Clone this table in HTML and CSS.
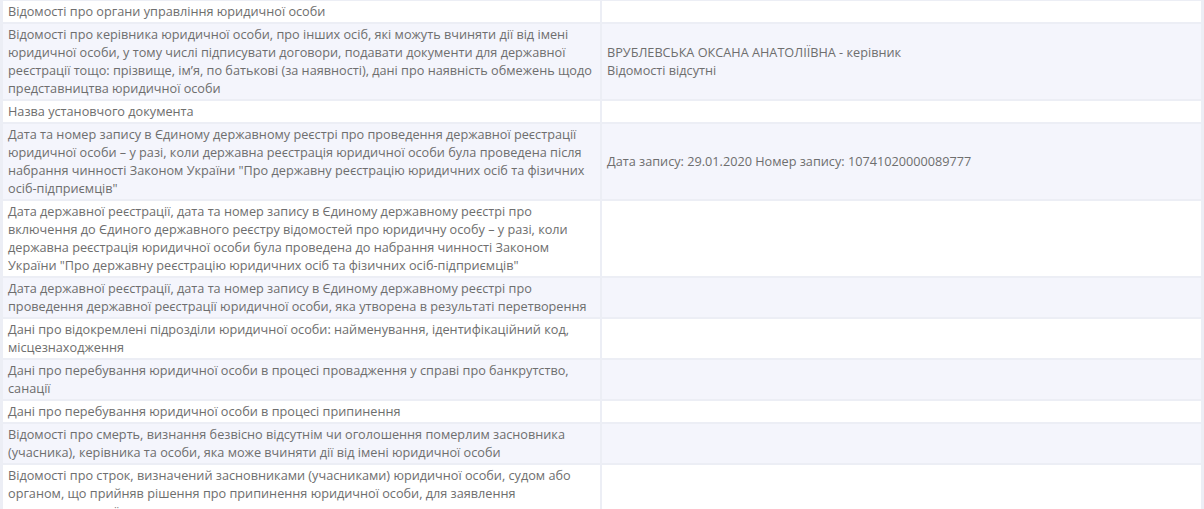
FILE: index.html
```html
<!DOCTYPE html>
<html lang="uk">
<head>
<meta charset="utf-8">
<link rel="stylesheet" href="styles.css">
</head>
<body>
<table class="info">
<tbody>
<tr class="odd"><td class="label">Відомості про органи управління юридичної особи</td><td class="value"></td></tr>
<tr class="even"><td class="label">Відомості про керівника юридичної особи, про інших осіб, які можуть вчиняти дії від імені юридичної особи, у тому числі підписувати договори, подавати документи для державної реєстрації тощо: прізвище, ім’я, по батькові (за наявності), дані про наявність обмежень щодо представництва юридичної особи</td><td class="value">ВРУБЛЕВСЬКА ОКСАНА АНАТОЛІЇВНА - керівник<br>Відомості відсутні</td></tr>
<tr class="odd"><td class="label">Назва установчого документа</td><td class="value"></td></tr>
<tr class="even"><td class="label">Дата та номер запису в Єдиному державному реєстрі про проведення державної реєстрації юридичної особи – у разі, коли державна реєстрація юридичної особи була проведена після набрання чинності Законом України "Про державну реєстрацію юридичних осіб та фізичних осіб-підприємців"</td><td class="value">Дата запису: 29.01.2020 Номер запису: 10741020000089777</td></tr>
<tr class="odd"><td class="label">Дата державної реєстрації, дата та номер запису в Єдиному державному реєстрі про включення до Єдиного державного реєстру відомостей про юридичну особу – у разі, коли державна реєстрація юридичної особи була проведена до набрання чинності Законом України "Про державну реєстрацію юридичних осіб та фізичних осіб-підприємців"</td><td class="value"></td></tr>
<tr class="even"><td class="label">Дата державної реєстрації, дата та номер запису в Єдиному державному реєстрі про проведення державної реєстрації юридичної особи, яка утворена в результаті перетворення</td><td class="value"></td></tr>
<tr class="odd"><td class="label">Дані про відокремлені підрозділи юридичної особи: найменування, ідентифікаційний код, місцезнаходження</td><td class="value"></td></tr>
<tr class="even"><td class="label">Дані про перебування юридичної особи в процесі провадження у справі про банкрутство, санації</td><td class="value"></td></tr>
<tr class="odd"><td class="label">Дані про перебування юридичної особи в процесі припинення</td><td class="value"></td></tr>
<tr class="even"><td class="label">Відомості про смерть, визнання безвісно відсутнім чи оголошення померлим засновника (учасника), керівника та особи, яка може вчиняти дії від імені юридичної особи</td><td class="value"></td></tr>
<tr class="odd"><td class="label">Відомості про строк, визначений засновниками (учасниками) юридичної особи, судом або органом, що прийняв рішення про припинення юридичної особи, для заявлення кредиторами своїх вимог</td><td class="value"></td></tr>
</tbody>
</table>
</body>
</html>
```
FILE: styles.css
```css
html, body {
  margin: 0;
  padding: 0;
  background: #eceef5;
}
body {
  font-family: "Open Sans", "Liberation Sans", sans-serif;
  font-size: 12.7px;
  line-height: 18px;
  color: #6e6e6e;
  overflow: hidden;
}
.info {
  width: 1202px;
  border-collapse: separate;
  border-spacing: 2px;
  margin: -1px 0 0 1px;
  table-layout: fixed;
}
.info td {
  padding: 1px 5px 2px 5px;
  vertical-align: middle;
}
.info .label {
  width: 587px;
}
.odd td {
  background: #ffffff;
}
.even td {
  background: #f4f5fc;
}
```
